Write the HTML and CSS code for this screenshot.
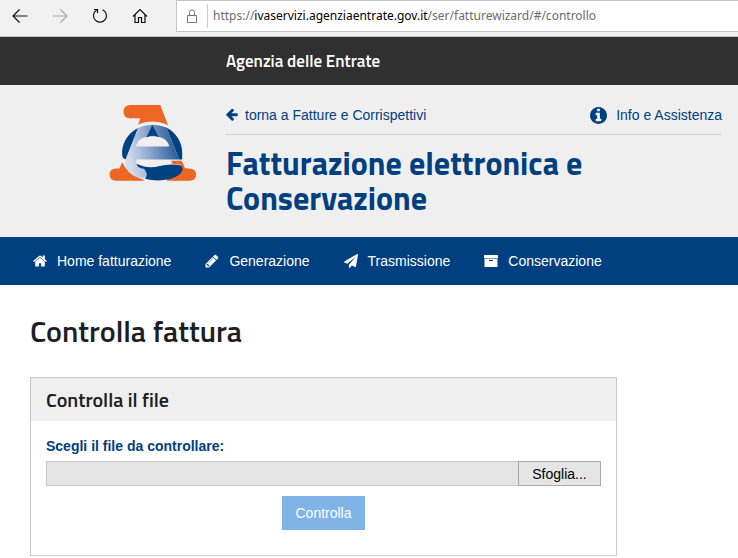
FILE: index.html
```html
<!DOCTYPE html>
<html lang="it">
<head>
<meta charset="utf-8">
<title>Fatturazione elettronica e Conservazione</title>
<link rel="stylesheet" href="styles.css">
</head>
<body>
<div class="browser-bar">
  <div class="browser-actions">
    <button class="tool" type="button" aria-label="Indietro"><svg viewBox="0 0 16 16"><path d="M15.500 8H1M7.500 1.500L1 8l6.500 6.500"/></svg></button>
    <button class="tool tool-off" type="button" aria-label="Avanti"><svg viewBox="0 0 16 16"><path d="M.5 8H15M8.500 1.500L15 8l-6.500 6.500"/></svg></button>
    <button class="tool" type="button" aria-label="Aggiorna"><svg viewBox="0 0 16 16"><path d="M10.500 1.700A6.500 6.500 0 1 1 4.500 2.200M2 1.500h3.500V5"/></svg></button>
    <button class="tool" type="button" aria-label="Pagina iniziale"><svg viewBox="0 0 16 16"><path d="M1 8.500L8 1.500l7 7M3 7v7.500h3.500V9.500h3v5H13V7"/></svg></button>
  </div>
  <div class="address">
    <svg class="lock" viewBox="0 0 12 14"><path d="M1.500 6.500h9v7h-9zM3.500 6.500V3.500a2.500 2.500 0 0 1 5 0v3"/></svg>
    <span class="url">https://<b>ivaservizi.agenziaentrate.gov.it</b>/ser/fatturewizard/#/controllo</span>
  </div>
</div>

<div class="agency">Agenzia delle Entrate</div>

<header class="masthead">
  <svg class="logo" viewBox="26 30 264 232" role="img" aria-label="Agenzia delle Entrate">
    <defs>
      <linearGradient id="fade" x1="0" x2="1" y1=".3" y2=".1">
        <stop offset="0" stop-color="#d3ddec"/><stop offset=".4" stop-color="#8ba5cc"/><stop offset="1" stop-color="#104b8e"/>
      </linearGradient>
    </defs>
    <path fill="#ec6624" d="M88 30H180L206 98H110L120 70H88Q69 68 69 50Q69 32 88 30Z"/>
    <path fill="#ec6624" d="M70 190L57 221H46Q27 222 27 240Q28 258 46 258H130V190Z"/>
    <path fill="#ec6624" d="M212 197H244L254 221H267Q288 222 288 240Q287 258 268 258H200Z"/>
    <ellipse cx="156" cy="169" rx="98" ry="89" fill="#efefef"/>
    <path fill="#ec6624" d="M213 198H244L254 221H262V250L225 258L246 232Q250 212 234 208H217Z"/>
    <path fill="#004281" d="M76 194Q66 192 65 181A91 86 0 0 1 113 99ZM198 98A91 86 0 0 1 246 178V194H237Z"/>
    <path fill="url(#fade)" d="M113 99Q156 80 198 98L237 194H108V208Q115 216 132 222Q143 239 132 249Q115 252 97 242Q68 224 76 193Z"/>
    <path fill="#efefef" d="M106 155Q113 124 156 124Q200 124 207 155Z"/>
    <path fill="#004281" d="M156 90L176 127Q155 118 138 128Z"/>
    <path fill="#004281" d="M108 207Q145 224 178 214Q201 207 233 210Q249 212 247 226Q241 244 210 253Q169 262 134 252Q145 238 131 222Q112 220 108 207Z"/>
  </svg>
  <div class="masthead-text">
    <div class="links">
      <a href="#back"><svg class="icon-arrow" viewBox="160 160 1536 1664"><path d="M1664 896v128q0 53-32.500 90.500t-84.500 37.500h-704l293 294q38 36 38 90t-38 90l-75 76q-37 37-90 37-52 0-91-37l-651-652q-37-37-37-90 0-52 37-91l651-650q38-38 91-38 52 0 90 38l75 74q38 38 38 91t-38 91l-293 293h704q52 0 84.500 37.500t32.500 90.500z"/></svg>torna a Fatture e Corrispettivi</a>
      <a href="#info" class="info"><svg class="icon-info" viewBox="128 128 1536 1536"><path d="M1152 1376v-160q0-14-9-23t-23-9h-96v-512q0-14-9-23t-23-9h-320q-14 0-23 9t-9 23v160q0 14 9 23t23 9h96v320h-96q-14 0-23 9t-9 23v160q0 14 9 23t23 9h448q14 0 23-9t9-23zm-128-896v-160q0-14-9-23t-23-9h-192q-14 0-23 9t-9 23v160q0 14 9 23t23 9h192q14 0 23-9t9-23zm640 416q0 209-103 385.500t-279.500 279.500-385.500 103-385.500-103-279.500-279.500-103-385.500 103-385.500 279.500-279.500 385.500-103 385.500 103 279.500 279.500 103 385.500z"/></svg>Info e Assistenza</a>
    </div>
    <h1>Fatturazione elettronica e Conservazione</h1>
  </div>
</header>

<nav class="menu">
  <a href="#home"><svg viewBox="64 64 1664 1664"><path d="M1472 992v480q0 26-19 45t-45 19h-384v-384h-256v384h-384q-26 0-45-19t-19-45v-480q0-1 .5-3t.5-3l575-474 575 474q1 2 1 6zm223-69l-62 74q-8 9-21 11h-3q-13 0-21-7l-692-577-692 577q-12 8-24 7-13-2-21-11l-62-74q-8-10-7-23.500t11-21.500l719-599q32-26 76-26t76 26l244 204v-195q0-14 9-23t23-9h192q14 0 23 9t9 23v408l219 182q10 8 11 21.500t-7 23.500z"/></svg>Home fatturazione</a>
  <a href="#generazione"><svg viewBox="64 64 1664 1664"><path d="M491 1536l91-91-235-235-91 91v107h128v128h107zm523-928q0-22-22-22-10 0-17 7l-542 542q-7 7-7 17 0 22 22 22 10 0 17-7l542-542q7-7 7-17zm-54-192l416 416-832 832h-416v-416zm683 96q0 53-37 90l-166 166-416-416 166-165q36-38 90-38 53 0 91 38l235 234q37 39 37 91z"/></svg>Generazione</a>
  <a href="#trasmissione"><svg viewBox="0 0 1792 1792"><path d="M1764 11q33 24 27 64l-256 1536q-5 29-32 45-14 8-31 8-11 0-24-5l-453-185-242 295q-18 23-49 23-13 0-22-4-19-7-30.500-23.500t-11.500-36.500v-349l864-1059-1069 925-395-162q-37-14-40-55-2-40 32-59l1664-960q15-9 32-9 20 0 36 11z"/></svg>Trasmissione</a>
  <a href="#conservazione"><svg viewBox="0 0 14 14"><path fill-rule="evenodd" d="M0 1h14v3H0zM.5 4.500h13V13H.5zM5 6v1h4V6z"/></svg>Conservazione</a>
</nav>

<main>
  <h2>Controlla fattura</h2>
  <form class="panel">
    <h3>Controlla il file</h3>
    <div class="panel-body">
      <label for="file">Scegli il file da controllare:</label>
      <div class="file-row">
        <input id="file" type="text" readonly>
        <button class="browse" type="button">Sfoglia...</button>
      </div>
      <button class="submit" type="button">Controlla</button>
    </div>
  </form>
</main>
</body>
</html>
```
FILE: styles.css
```css
* { box-sizing: border-box; }
body {
  margin: 0;
  background: #fff;
  color: #1c2024;
  font: 14px/20px "Liberation Sans", Arial, sans-serif;
}
h1, h2, h3 { margin: 0; font-family: "Titillium Web", "Noto Sans", sans-serif; }
a { text-decoration: none; }
button, input { font: inherit; }

.browser-bar {
  display: flex;
  height: 37px;
  padding-left: 12px;
  background: #f1f1f1;
  border-bottom: 1px solid #c4c4c4;
}
.browser-actions { display: flex; gap: 24px; align-items: center; width: 164px; padding-bottom: 4px; }
.tool { width: 16px; height: 16px; padding: 0; border: 0; background: none; }
.tool svg { display: block; fill: none; stroke: #111; stroke-width: 1.2; }
.tool-off svg { stroke: #aaa; }
.address {
  display: flex;
  flex: 1;
  align-items: center;
  height: 32px;
  background: #fff;
  border: 1px solid #c4c4c4;
  border-right: 0;
}
.lock { width: 12px; margin: 0 9px; fill: none; stroke: #777; }
.url {
  padding-left: 5px;
  border-left: 1px solid #ccc;
  color: #6b6b6b;
  font: 12px/24px "Noto Sans", "Segoe UI", sans-serif;
  white-space: nowrap;
}
.url b { color: #000; font-weight: 400; }

.agency {
  padding-left: 226px;
  background: #303030;
  color: #fff;
  font: 600 17px/48px "Titillium Web", "Noto Sans", sans-serif;
}

.masthead {
  display: flex;
  gap: 29px;
  min-height: 152px;
  padding: 20px 16px 20px 109px;
  background: #efefef;
}
.logo { width: 88px; height: 77px; flex: none; overflow: visible; }
.masthead-text { flex: 1; }
.links {
  display: flex;
  justify-content: space-between;
  padding-bottom: 9px;
  border-bottom: 1px solid #d2d2d2;
}
.links a { display: flex; align-items: center; color: #004080; }
.links svg { fill: #004080; }
.icon-arrow { width: 12px; height: 14px; margin-right: 7px; }
.icon-info { width: 17px; height: 17px; margin-right: 9px; }
h1 { margin-top: 11px; color: #004080; font-size: 32px; line-height: 35px; font-weight: 700; }

.menu { display: flex; gap: 34px; padding: 0 33px; background: #004080; }
.menu a { display: flex; align-items: center; gap: 10px; color: #fff; line-height: 48px; }
.menu svg { width: 14px; height: 14px; fill: #fff; }

main { padding: 26px 30px 0; }
h2 { font-size: 30px; line-height: 40px; font-weight: 600; }
.panel { max-width: 587px; margin-top: 26px; border: 1px solid #c8c8c8; }
h3 {
  padding: 0 15px;
  background: #efefef;
  font-size: 20px;
  line-height: 43px;
  font-weight: 600;
}
.panel-body { padding: 15px 15px 25px; }
label { display: block; color: #004080; font-weight: 700; }
.file-row { display: flex; margin-top: 5px; }
.file-row input {
  flex: 1;
  min-width: 0;
  height: 25px;
  background: #e5e5e5;
  border: 1px solid #c8c8c8;
  border-right: 0;
  border-radius: 0;
}
.browse { width: 83px; height: 25px; padding: 0; background: #e5e5e5; border: 1px solid #a9a9a9; }
.submit {
  display: block;
  height: 34px;
  margin: 10px auto 0;
  padding: 0 13px;
  background: #80b3e6;
  border: 0;
  color: #fff;
}
```
